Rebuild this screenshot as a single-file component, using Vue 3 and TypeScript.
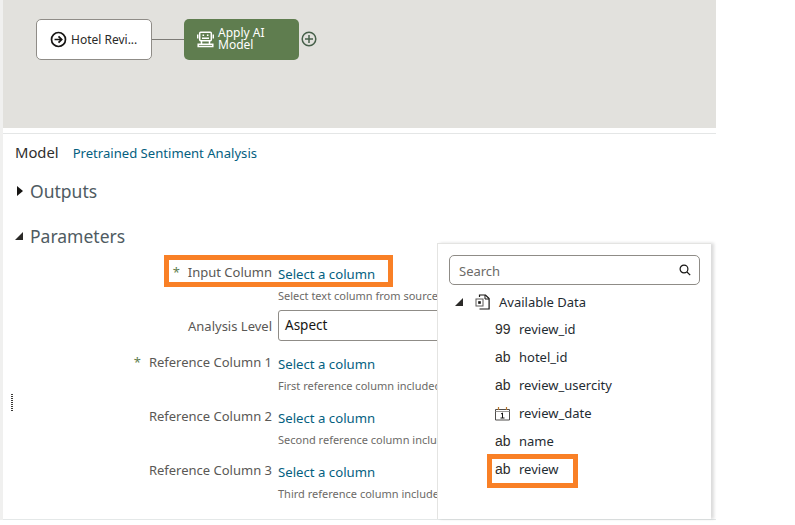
<template>
  <div class="page">
    <div class="side-strip"></div>
    <main class="main">
      <section class="canvas">
        <div class="node node-source">
          <svg class="node-icon" width="17" height="17" viewBox="0 0 18 18" fill="none" stroke="#161513" aria-hidden="true">
            <circle cx="9" cy="9" r="7.4" stroke-width="1.8" />
            <path d="M4.8 9h7.4M9 5.6 12.4 9 9 12.4" stroke-width="1.8" />
          </svg>
          <span>Hotel Revi...</span>
        </div>
        <div class="connector"></div>
        <div class="node node-model">
          <svg class="robot" width="17" height="17" viewBox="0 0 17 17" fill="none" stroke="#fff" stroke-width="1.5" aria-hidden="true">
            <rect x="2.7" y="1.2" width="11.6" height="8.6" rx="1" />
            <path d="M.7 3.500v4M16.300 3.500v4" />
            <path d="M5.500 4.200h1.600M9.900 4.200h1.600M5 7.200h7" />
            <path d="M4.500 10v3M12.500 10v3" />
            <path d="M1.200 13.200h14.600v2.400H1.200z" />
          </svg>
          <span class="model-label">Apply AI<br />Model</span>
        </div>
        <svg class="add" width="16" height="16" viewBox="0 0 16 16" fill="none" stroke="#47604a" stroke-width="1.5" aria-hidden="true">
          <circle cx="8" cy="8" r="6.800" />
          <path d="M4 8h8M8 4v8" />
        </svg>
      </section>

      <section class="panel">
        <div class="model-row">
          <span class="model-title">Model</span>
          <a class="link model-link">Pretrained Sentiment Analysis</a>
        </div>

        <h2 class="section-head head-outputs"><i class="tri-right"></i>Outputs</h2>
        <h2 class="section-head head-params"><i class="tri-open"></i>Parameters</h2>

        <div class="form">
          <template v-for="f in fields" :key="f.label">
            <label class="field-label" :class="{ required: f.required, 'beside-box': f.select }">{{ f.label }}</label>
            <div class="field-value">
              <template v-if="f.select">
                <div class="select-box">{{ f.select }}</div>
              </template>
              <template v-else>
                <a class="link column-link">Select a column</a>
                <p class="hint">{{ f.hint }}</p>
              </template>
            </div>
          </template>
        </div>

        <div class="handle"></div>
        <div class="callout callout-input"></div>

        <aside class="popup">
          <div class="search">
            <span class="search-text">Search</span>
            <svg width="12" height="12" viewBox="0 0 12 12" fill="none" stroke="#161513" stroke-width="1.2" aria-hidden="true">
              <circle cx="5" cy="5" r="3.900" />
              <path d="m8 8 3.200 3.200" />
            </svg>
          </div>
          <div class="tree-root">
            <i class="tri-open tri-small"></i>
            <svg class="file-icon" width="15" height="16" viewBox="0 0 15 16" fill="none" aria-hidden="true">
              <path d="M4.500 3V1h6l3.600 3.600V15H4.500" stroke="#161513" stroke-width="1.200" />
              <path d="M10 1v4h4" stroke="#161513" stroke-width="1" />
              <rect x="1" y="5" width="7" height="7" fill="#fff" stroke="#5c5a58" />
              <rect x="3.200" y="7.200" width="2.600" height="2.600" fill="#161513" />
            </svg>
            <span>Available Data</span>
          </div>
          <ul class="columns">
            <li v-for="c in columns" :key="c.name" class="column-row">
              <svg v-if="c.kind === 'date'" class="cal" width="15" height="15" viewBox="0 0 15 15" fill="none" stroke="#4f4d4b" aria-hidden="true">
                <path d="M.5 3.500h14v10.500H.5z" />
                <path d="M3.500 1v3M11.500 1v3" stroke="#b9772e" stroke-width="1.200" />
                <path d="M.5 5.500h14" stroke="#9a9896" />
                <path d="M6 8l1.500-1v5M5.500 12h4" stroke="#161513" />
              </svg>
              <span v-else class="kind">{{ c.kind }}</span>
              <span class="column-name">{{ c.name }}</span>
            </li>
          </ul>
          <div class="callout callout-review"></div>
        </aside>
      </section>
    </main>
  </div>
</template>

<script setup lang="ts">
  type Field = {
    label: string
    required?: boolean
    hint?: string
    select?: string
  }

  const fields: Field[] = [
    { label: 'Input Column', required: true, hint: 'Select text column from source' },
    { label: 'Analysis Level', select: 'Aspect' },
    { label: 'Reference Column 1', required: true, hint: 'First reference column included' },
    { label: 'Reference Column 2', hint: 'Second reference column included' },
    { label: 'Reference Column 3', hint: 'Third reference column included' },
  ]

  const columns = [
    { kind: '99', name: 'review_id' },
    { kind: 'ab', name: 'hotel_id' },
    { kind: 'ab', name: 'review_usercity' },
    { kind: 'date', name: 'review_date' },
    { kind: 'ab', name: 'name' },
    { kind: 'ab', name: 'review' },
  ]
</script>

<style>
  html,
  body {
    margin: 0;
    background: #fff;
  }
</style>

<style scoped>
  .page {
    display: flex;
    width: 795px;
    height: 525px;
    overflow: hidden;
    background: #fff;
    color: #161513;
    font-family: "Noto Sans", "Open Sans", sans-serif;
  }

  .side-strip {
    flex: 0 0 3px;
    height: 520px;
    background: #f0f0ef;
  }

  .main {
    display: flex;
    flex-direction: column;
    flex: 0 0 713px;
    height: 520px;
  }

  .canvas {
    display: flex;
    align-items: center;
    flex: 0 0 128px;
    box-sizing: border-box;
    padding: 0 0 50px 33px;
    background: #e2e1dd;
  }

  .node {
    display: flex;
    align-items: center;
    box-sizing: border-box;
    width: 116px;
    height: 41px;
    border-radius: 5px;
  }

  .node-source {
    gap: 4px;
    padding-left: 13px;
    background: #fff;
    border: 1px solid #8f8c87;
    font-size: 12px;
    color: #2b2a28;
  }

  .connector {
    flex: 0 0 32px;
    height: 1px;
    background: #7d7b76;
  }

  .node-model {
    gap: 4px;
    width: 115px;
    padding-left: 13px;
    background: #5f7d4f;
    color: #fff;
    font-size: 12px;
    line-height: 12px;
  }

  .robot {
    flex: none;
  }

  .add {
    margin-left: 2px;
  }

  .panel {
    position: relative;
    flex: 1;
    margin-top: 5px;
    border-top: 1px solid #e4e6e6;
    border-bottom: 1px solid #e4e8e8;
    background: #fff;
  }

  .model-row {
    display: flex;
    align-items: baseline;
    gap: 14px;
    padding: 8px 0 0 12px;
    height: 23px;
  }

  .model-title {
    font-size: 14.800px;
    color: #2f2e2c;
  }

  .link {
    color: #04607f;
  }

  .model-link {
    font-size: 13.100px;
  }

  .section-head {
    display: flex;
    align-items: center;
    margin: 0;
    color: #4f5b62;
    font-size: 17.500px;
    font-weight: 400;
    line-height: 24px;
  }

  .head-outputs {
    margin-top: 14px;
    padding-left: 14px;
  }

  .head-params {
    margin-top: 21px;
    padding-left: 12px;
  }

  .tri-right {
    width: 0;
    height: 0;
    margin-right: 7px;
    border-top: 5px solid transparent;
    border-bottom: 5px solid transparent;
    border-left: 6px solid #161513;
  }

  .tri-open {
    width: 0;
    height: 0;
    margin-right: 7px;
    border-left: 8px solid transparent;
    border-bottom: 8px solid #2b2a28;
  }

  .form {
    display: grid;
    grid-template-columns: 269px 1fr;
    grid-template-rows: 50px 40px 54px 54px 54px;
    column-gap: 6px;
    margin-top: 12px;
  }

  .field-label {
    padding-top: 3px;
    color: #5a5855;
    font-size: 13px;
    line-height: 18px;
    text-align: right;
  }

  .field-label.beside-box {
    padding-top: 7px;
  }

  .field-label.required::before {
    content: "*";
    margin-right: 8px;
    color: #5f7d4f;
  }

  .field-value {
    min-width: 0;
  }

  .column-link {
    display: block;
    padding-top: 4px;
    font-size: 13.200px;
    line-height: 20px;
  }

  .hint {
    margin: 4px 0 0;
    color: #6c6a67;
    font-size: 11px;
    line-height: 16px;
    white-space: nowrap;
  }

  .select-box {
    box-sizing: border-box;
    width: 180px;
    height: 31px;
    padding-left: 6px;
    border: 1px solid #8f8c87;
    border-radius: 3px;
    color: #161513;
    font-size: 13.500px;
    line-height: 29px;
  }

  .handle {
    position: absolute;
    top: 260px;
    left: 8px;
    width: 2px;
    height: 17px;
    background: repeating-linear-gradient(#3a3937 0 1px, transparent 1px 2px);
  }

  .callout {
    position: absolute;
    box-sizing: border-box;
    border: 5px solid #f98026;
  }

  .callout-input {
    top: 121px;
    left: 161px;
    width: 229px;
    height: 32px;
  }

  .callout-review {
    top: 210px;
    left: 49px;
    width: 91px;
    height: 34px;
  }

  .popup {
    position: absolute;
    top: 109px;
    left: 434px;
    bottom: 0;
    box-sizing: border-box;
    width: 274px;
    padding: 11px 11px 0 11px;
    background: #fff;
    border-top: 1px solid #e4e4e2;
    border-left: 1px solid #e4e4e2;
    box-shadow: 3px 0 3px rgba(0, 0, 0, 0.14);
    font-size: 13px;
  }

  .search {
    display: flex;
    align-items: center;
    justify-content: space-between;
    box-sizing: border-box;
    height: 30px;
    padding: 0 8px 0 9px;
    border: 1px solid #8f8c87;
    border-radius: 5px;
    color: #6c6a67;
  }

  .search-text {
    padding-top: 2px;
  }

  .tree-root {
    display: flex;
    align-items: center;
    height: 20px;
    margin-top: 7px;
    padding-left: 6px;
    color: #1f2c33;
  }

  .tri-small {
    margin-right: 12px;
  }

  .file-icon {
    margin-right: 9px;
  }

  .columns {
    margin: 3px 0 0;
    padding: 0;
    list-style: none;
  }

  .column-row {
    display: flex;
    align-items: center;
    height: 28px;
    padding-left: 46px;
    color: #1f2c33;
  }

  .kind {
    width: 24px;
    color: #2f2e2c;
    font-family: "Liberation Sans", sans-serif;
    font-size: 14px;
  }

  .cal {
    width: 15px;
    margin-right: 9px;
  }
</style>
